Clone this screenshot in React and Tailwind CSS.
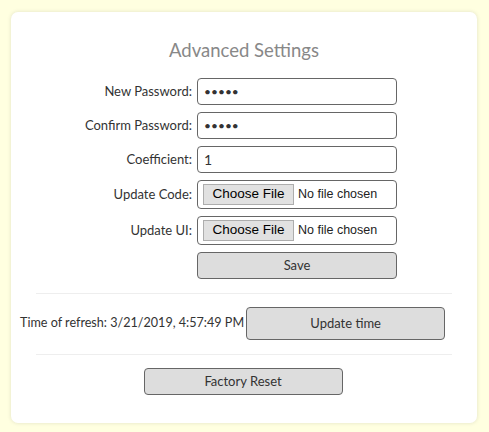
import { useState } from "react";

const font = { fontFamily: "Lato, 'Open Sans', sans-serif" };

function Row({ label, children }) {
  return (
    <div className="flex items-center">
      <label className="w-[186px] pr-[5px] text-right text-[13px] text-[#333]">{label}</label>
      {children}
    </div>
  );
}

function FileBox() {
  return (
    <div className="flex h-[29px] w-[200px] items-center rounded-[4px] border border-[#666] bg-white pl-[5px]">
      <span
        className="flex h-[21px] w-[91px] items-center justify-center border border-[#adadad] bg-[#e1e1e1] text-[13.5px] text-black"
        style={{ fontFamily: "'Liberation Sans', Arial, sans-serif" }}
      >
        Choose File
      </span>
      <span
        className="pl-[4px] text-[12.5px] text-[#222]"
        style={{ fontFamily: "'Liberation Sans', Arial, sans-serif" }}
      >
        No file chosen
      </span>
    </div>
  );
}

export default function App() {
  const [coef, setCoef] = useState("1");

  return (
    <div className="min-h-[432px] bg-[#ffffe0] px-[11px] pt-[12px]" style={font}>
      <div className="h-[411px] w-[466px] rounded-[7px] bg-white pt-[26px] shadow-[0_0_4px_rgba(0,0,0,0.12)]">
        <h2 className="mb-[16px] text-center text-[18.5px] leading-[24px] text-[#888]">Advanced Settings</h2>

        <div className="flex flex-col gap-[7px]">
          <Row label="New Password:">
            <input
              type="password"
              defaultValue="abcde"
              className="h-[27px] w-[200px] rounded-[4px] border border-[#666] px-[6px] text-[12px] text-[#333] outline-none"
            />
          </Row>
          <Row label="Confirm Password:">
            <input
              type="password"
              defaultValue="abcde"
              className="h-[27px] w-[200px] rounded-[4px] border border-[#666] px-[6px] text-[12px] text-[#333] outline-none"
            />
          </Row>
          <Row label="Coefficient:">
            <input
              type="text"
              value={coef}
              onChange={(e) => setCoef(e.target.value)}
              className="h-[27px] w-[200px] rounded-[4px] border border-[#666] px-[6px] text-[14px] text-[#333] outline-none"
            />
          </Row>
          <Row label="Update Code:">
            <FileBox />
          </Row>
          <Row label="Update UI:">
            <FileBox />
          </Row>
          <div className="flex">
            <div className="w-[186px]" />
            <button className="h-[27px] w-[200px] rounded-[4px] border border-[#666] bg-[#ddd] text-[13px] text-[#333]">
              Save
            </button>
          </div>
        </div>

        <div className="mx-[25px] mt-[14px] border-t border-[#eee]" />

        <div className="mt-[13px] flex items-center gap-[2px] pl-[9px]">
          <span className="text-[12.6px] text-[#333]">Time of refresh: 3/21/2019, 4:57:49 PM</span>
          <button className="h-[33px] w-[199px] rounded-[4px] border border-[#666] bg-[#ddd] text-[13px] text-[#333]">
            Update time
          </button>
        </div>

        <div className="mx-[25px] mt-[14px] border-t border-[#eee]" />

        <div className="mt-[13px] flex justify-center">
          <button className="ml-[-2px] h-[27px] w-[199px] rounded-[4px] border border-[#666] bg-[#ddd] text-[13px] text-[#333]">
            Factory Reset
          </button>
        </div>
      </div>
    </div>
  );
}
